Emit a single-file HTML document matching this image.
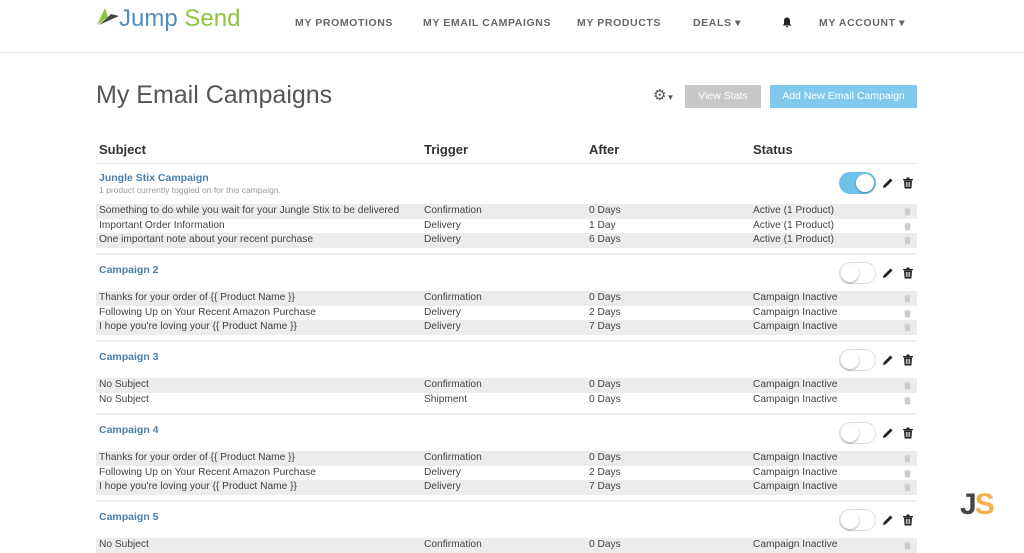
<!DOCTYPE html>
<html><head><meta charset="utf-8"><style>
*{margin:0;padding:0;box-sizing:border-box}
body{width:1024px;height:550px;overflow:hidden;background:#fff;font-family:"Liberation Sans",sans-serif;color:#444;position:relative}
.a{position:absolute;white-space:nowrap}
.nav{font-size:10.5px;font-weight:bold;letter-spacing:0.6px;color:#666;top:17px}
.r{position:absolute;left:96px;width:821px;height:14.5px;font-size:10.2px;line-height:14.5px;color:#444}
.r.s{background:#ececec}
.r span{position:absolute;top:0}
.r .c1{left:3px}.r .c2{left:328px}.r .c3{left:493px}.r .c4{left:657px}
.r svg{position:absolute;left:808px;top:3px}
.ct{position:absolute;left:99px;font-size:10.5px;font-weight:bold;color:#4a7fa8}
.sep{position:absolute;left:96px;width:821px;height:2px;background:#eee}
.tg{position:absolute;left:839px;width:37px;height:22px;border-radius:11px;border:1px solid #ddd;background:#fff}
.tg i{position:absolute;left:1px;top:1px;width:18px;height:18px;border-radius:50%;background:#fff;box-shadow:0 1px 2px rgba(0,0,0,.35)}
.tg.on{background:#6fc1ea;border-color:#6fc1ea}.tg.on i{left:16px}
.ic{position:absolute;left:882px}
</style></head><body>
<svg width="0" height="0" style="position:absolute"><defs>
<symbol id="pen" viewBox="0 0 12 12"><path d="M1 11 L1.6 8.4 L8.5 1.5 L10.5 3.5 L3.6 10.4Z" fill="#222"/></symbol>
<symbol id="tr" viewBox="0 0 10 12"><path d="M0 2h10v1.3H0zM3.5 0.5h3v1.5h-3zM1 3.5h8l-0.6 8H1.6z" fill="#222"/><path d="M3.3 5v5M5 5v5M6.7 5v5" stroke="#fff" stroke-width="0.8"/></symbol>
<symbol id="trs" viewBox="0 0 10 12"><path d="M0 2h10v1.3H0zM3.5 0.5h3v1.5h-3zM1 3.5h8l-0.6 8H1.6z" fill="#ccc"/></symbol>
</defs></svg>
<svg class="a" style="left:97px;top:8px" width="24" height="18" viewBox="0 0 24 18"><path d="M0 17 L8 0 L11 9Z" fill="#8cc63f"/><path d="M2 17 L22 8 L14 6 L11 9Z" fill="#444"/></svg>
<div class="a" style="left:119px;top:5px;font-size:24px;color:#4f8fc0">Jump <span style="color:#8cc63f">Send</span></div>
<div class="a nav" style="left:295px">MY PROMOTIONS</div>
<div class="a nav" style="left:423px">MY EMAIL CAMPAIGNS</div>
<div class="a nav" style="left:577px">MY PRODUCTS</div>
<div class="a nav" style="left:693px">DEALS ▾</div>
<svg class="a" style="left:782px;top:17px" width="10" height="11" viewBox="0 0 10 11"><path d="M5 0.5C2.5 0.5 2 2.5 2 4.5V7L0.5 8.5h9L8 7V4.5C8 2.5 7.5 0.5 5 0.5z M3.8 9.3h2.4a1.2 1.2 0 0 1-2.4 0z" fill="#222"/></svg>
<div class="a nav" style="left:819px">MY ACCOUNT ▾</div>
<div class="a" style="left:0;top:52px;width:1024px;height:1px;background:#e6e6e6"></div>

<div class="a" style="left:96px;top:81px;font-size:25px;color:#555">My Email Campaigns</div>
<div class="a" style="left:653px;top:86px;font-size:15px;color:#555">⚙<span style="font-size:8px">▼</span></div>
<div class="a" style="left:685px;top:85px;width:76px;height:23px;background:#c8c8c8;color:#fff;font-size:10.5px;line-height:23px;text-align:center">View Stats</div>
<div class="a" style="left:770px;top:85px;width:147px;height:23px;background:#80c8ec;color:#fff;font-size:10.5px;line-height:23px;text-align:center">Add New Email Campaign</div>

<div class="a" style="left:99px;top:142px;font-size:13px;font-weight:bold;color:#333">Subject</div>
<div class="a" style="left:424px;top:142px;font-size:13px;font-weight:bold;color:#333">Trigger</div>
<div class="a" style="left:589px;top:142px;font-size:13px;font-weight:bold;color:#333">After</div>
<div class="a" style="left:753px;top:142px;font-size:13px;font-weight:bold;color:#333">Status</div>
<div class="a" style="left:96px;top:163px;width:821px;height:1px;background:#e6e6e6"></div>

<div class="ct" style="top:172px">Jungle Stix Campaign</div>
<div class="a" style="left:99px;top:185px;font-size:8.5px;color:#999">1 product currently toggled on for this campaign.</div>
<div class="tg on" style="top:172px"><i></i></div><svg class="ic" style="top:177px" width="12" height="12"><use href="#pen"/></svg><svg class="ic" style="left:903px;top:177px" width="10" height="12"><use href="#tr"/></svg>
<div class="r s" style="top:204px"><span class="c1">Something to do while you wait for your Jungle Stix to be delivered</span><span class="c2">Confirmation</span><span class="c3">0 Days</span><span class="c4">Active (1 Product)</span><svg width="7" height="9"><use href="#trs"/></svg></div>
<div class="r" style="top:218.5px"><span class="c1">Important Order Information</span><span class="c2">Delivery</span><span class="c3">1 Day</span><span class="c4">Active (1 Product)</span><svg width="7" height="9"><use href="#trs"/></svg></div>
<div class="r s" style="top:233px"><span class="c1">One important note about your recent purchase</span><span class="c2">Delivery</span><span class="c3">6 Days</span><span class="c4">Active (1 Product)</span><svg width="7" height="9"><use href="#trs"/></svg></div>
<div class="sep" style="top:253px"></div>

<div class="ct" style="top:264px">Campaign 2</div>
<div class="tg" style="top:262px"><i></i></div><svg class="ic" style="top:267px" width="12" height="12"><use href="#pen"/></svg><svg class="ic" style="left:903px;top:267px" width="10" height="12"><use href="#tr"/></svg>
<div class="r s" style="top:291px"><span class="c1">Thanks for your order of {{ Product Name }}</span><span class="c2">Confirmation</span><span class="c3">0 Days</span><span class="c4">Campaign Inactive</span><svg width="7" height="9"><use href="#trs"/></svg></div>
<div class="r" style="top:305.5px"><span class="c1">Following Up on Your Recent Amazon Purchase</span><span class="c2">Delivery</span><span class="c3">2 Days</span><span class="c4">Campaign Inactive</span><svg width="7" height="9"><use href="#trs"/></svg></div>
<div class="r s" style="top:320px"><span class="c1">I hope you're loving your {{ Product Name }}</span><span class="c2">Delivery</span><span class="c3">7 Days</span><span class="c4">Campaign Inactive</span><svg width="7" height="9"><use href="#trs"/></svg></div>
<div class="sep" style="top:340px"></div>

<div class="ct" style="top:351px">Campaign 3</div>
<div class="tg" style="top:349px"><i></i></div><svg class="ic" style="top:354px" width="12" height="12"><use href="#pen"/></svg><svg class="ic" style="left:903px;top:354px" width="10" height="12"><use href="#tr"/></svg>
<div class="r s" style="top:378px"><span class="c1">No Subject</span><span class="c2">Confirmation</span><span class="c3">0 Days</span><span class="c4">Campaign Inactive</span><svg width="7" height="9"><use href="#trs"/></svg></div>
<div class="r" style="top:392.5px"><span class="c1">No Subject</span><span class="c2">Shipment</span><span class="c3">0 Days</span><span class="c4">Campaign Inactive</span><svg width="7" height="9"><use href="#trs"/></svg></div>
<div class="sep" style="top:413px"></div>

<div class="ct" style="top:424px">Campaign 4</div>
<div class="tg" style="top:422px"><i></i></div><svg class="ic" style="top:427px" width="12" height="12"><use href="#pen"/></svg><svg class="ic" style="left:903px;top:427px" width="10" height="12"><use href="#tr"/></svg>
<div class="r s" style="top:451px"><span class="c1">Thanks for your order of {{ Product Name }}</span><span class="c2">Confirmation</span><span class="c3">0 Days</span><span class="c4">Campaign Inactive</span><svg width="7" height="9"><use href="#trs"/></svg></div>
<div class="r" style="top:465.5px"><span class="c1">Following Up on Your Recent Amazon Purchase</span><span class="c2">Delivery</span><span class="c3">2 Days</span><span class="c4">Campaign Inactive</span><svg width="7" height="9"><use href="#trs"/></svg></div>
<div class="r s" style="top:480px"><span class="c1">I hope you're loving your {{ Product Name }}</span><span class="c2">Delivery</span><span class="c3">7 Days</span><span class="c4">Campaign Inactive</span><svg width="7" height="9"><use href="#trs"/></svg></div>
<div class="sep" style="top:500px"></div>

<div class="ct" style="top:511px">Campaign 5</div>
<div class="tg" style="top:509px"><i></i></div><svg class="ic" style="top:514px" width="12" height="12"><use href="#pen"/></svg><svg class="ic" style="left:903px;top:514px" width="10" height="12"><use href="#tr"/></svg>
<div class="r s" style="top:538px"><span class="c1">No Subject</span><span class="c2">Confirmation</span><span class="c3">0 Days</span><span class="c4">Campaign Inactive</span><svg width="7" height="9"><use href="#trs"/></svg></div>

<div class="a" style="left:960px;top:488px;font-size:30px;font-weight:bold;color:#444;letter-spacing:-2px">J<span style="color:#f5b04a">S</span></div>
</body></html>
